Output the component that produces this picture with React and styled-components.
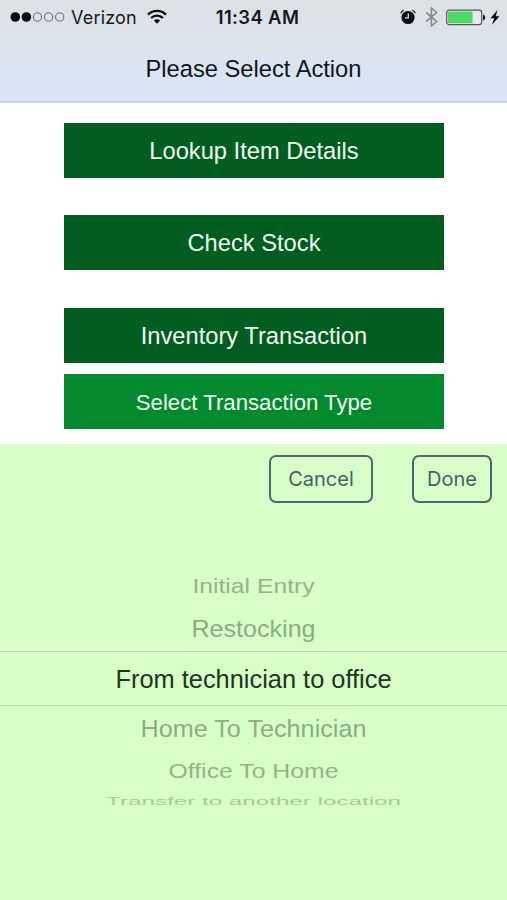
import React from 'react';
import styled, { createGlobalStyle } from 'styled-components';

const GlobalStyle = createGlobalStyle`
  * {
    box-sizing: border-box;
  }
  body {
    margin: 0;
    background: #fff;
    font-family: 'Liberation Sans', Arial, sans-serif;
  }
`;

const Screen = styled.div`
  display: flex;
  flex-direction: column;
  width: 507px;
  height: 900px;
  overflow: hidden;
  background: #fefffe;
`;

const Header = styled.header`
  height: 103px;
  background: linear-gradient(#dde1e6 0%, #dde3eb 40%, #d8e6f8 100%);
  border-bottom: 2px solid #d0d3d8;
`;

const StatusBar = styled.div`
  display: grid;
  grid-template-columns: 1fr auto 1fr;
  align-items: center;
  height: 34px;
  padding: 0 7px 0 10px;
  font-family: 'Inter', sans-serif;
  font-size: 18px;
  color: #15181c;
`;

const StatusGroup = styled.div`
  display: flex;
  align-items: center;
  justify-content: ${({ $end }) => ($end ? 'flex-end' : 'flex-start')};
`;

const Carrier = styled.span`
  margin: 0 10px 0 6px;
  letter-spacing: 0.2px;
`;

const Clock = styled.span`
  padding-left: 5px;
  font-size: 18.4px;
  font-weight: 600;
  letter-spacing: 0.4px;
`;

const Title = styled.h1`
  margin: 0;
  font-size: 23.7px;
  font-weight: 400;
  line-height: 70px;
  text-align: center;
  color: #11161c;
`;

const Actions = styled.main`
  display: flex;
  flex-direction: column;
  height: 341px;
  padding: 20px 63px 0 64px;
`;

const ActionButton = styled.button`
  flex: none;
  height: 55px;
  margin: 0 0 ${({ $gap }) => $gap || 0}px;
  padding: ${({ $light }) => ($light ? 4 : 3)}px 0 0;
  border: 0;
  background: ${({ $light }) => ($light ? '#04892e' : '#025d20')};
  color: #f1fbf2;
  font-family: inherit;
  font-size: ${({ $light }) => ($light ? 22.2 : 23.7)}px;
  line-height: 1;
`;

const Picker = styled.section`
  flex: 1;
  background: #d8ffc8;
`;

const Toolbar = styled.div`
  display: flex;
  justify-content: flex-end;
  gap: 39px;
  height: 125px;
  padding: 11px 15px 0 0;
`;

const ToolButton = styled.button`
  width: ${({ $width }) => $width}px;
  height: 48px;
  padding: 0;
  border: 2px solid #4a6a6c;
  border-radius: 7px;
  background: transparent;
  color: #456268;
  font-family: 'Inter', sans-serif;
  font-size: 20px;
`;

const Wheel = styled.div`
  display: flex;
  flex-direction: column;
`;

const Option = styled.div`
  display: flex;
  align-items: center;
  justify-content: center;
  height: ${({ $height }) => $height}px;
  border: solid ${({ $selected }) => ($selected ? '#b5d9aa' : 'transparent')};
  border-width: ${({ $selected }) => ($selected ? '1px 0' : '0')};
  color: ${({ $color }) => $color};
  font-size: ${({ $size }) => $size}px;
  line-height: 30px;
  white-space: nowrap;

  span {
    transform: scaleY(${({ $squash }) => $squash || 1});
  }
`;

const options = [
  { label: 'Initial Entry', height: 36, size: 24.7, squash: 0.8, color: '#91b586' },
  { label: 'Restocking', height: 46, size: 25.1, squash: 0.96, color: '#8bae81' },
  { label: 'From technician to office', height: 55, size: 25.4, selected: true, color: '#20351f' },
  { label: 'Home To Technician', height: 44, size: 25.2, squash: 0.96, color: '#8bae81' },
  { label: 'Office To Home', height: 43, size: 24.8, squash: 0.81, color: '#91b586' },
  { label: 'Transfer to another location', height: 16, size: 24.2, squash: 0.48, color: '#a6ca99' },
];

const SignalDots = () => (
  <svg width="55" height="12" viewBox="0 0 55 12">
    {[0, 1, 2, 3, 4].map((i) => (
      <circle
        key={i}
        cx={5.3 + i * 11.1}
        cy="6"
        r={i < 2 ? 4.8 : 4.1}
        fill={i < 2 ? '#0b0d10' : 'none'}
        stroke={i < 2 ? 'none' : '#62676d'}
        strokeWidth="1"
      />
    ))}
  </svg>
);

const WifiIcon = () => (
  <svg width="20" height="16" viewBox="0 0 20 16" fill="none" stroke="#0b0d10" strokeWidth="2.3">
    <path d="M1 5.6a12.8 12.8 0 0 1 18 0" />
    <path d="M4.1 9a8.4 8.4 0 0 1 11.8 0" />
    <path d="M10 14.8 6.9 11.6a4.5 4.5 0 0 1 6.2 0z" fill="#0b0d10" stroke="none" />
  </svg>
);

const AlarmIcon = () => (
  <svg width="16" height="16" viewBox="0 0 16 16" fill="none">
    <circle cx="8" cy="8.5" r="6.6" fill="#0b0d10" />
    <path d="M.7 4.2A5 5 0 0 1 3.8 1.2M12.2 1.2a5 5 0 0 1 3.1 3" stroke="#0b0d10" strokeWidth="1.1" />
    <path d="M8.3 4.5v4.3H5" stroke="#dde1e6" strokeWidth="1.3" />
  </svg>
);

const BluetoothIcon = () => (
  <svg width="13" height="20" viewBox="0 0 13 20" fill="none" stroke="#858a90" strokeWidth="1.6">
    <path d="m1 5.3 10.6 9.2L6.4 19V1l5.2 4.5L1 14.7" />
  </svg>
);

const BatteryIcon = () => (
  <svg width="40" height="17" viewBox="0 0 40 17">
    <rect x=".7" y="1.2" width="35" height="14.4" rx="2.5" fill="#e6e9ed" stroke="#4f5a58" strokeWidth="1.2" />
    <rect x="2" y="2.5" width="24.6" height="11.8" rx="1" fill="#4cd863" />
    <path d="M37 5.5c3 .8 3 5.1 0 5.9z" fill="#15181c" />
  </svg>
);

const BoltIcon = () => (
  <svg width="10" height="15" viewBox="0 0 10 15">
    <path d="M7.5 0 .5 8.3h3.7L2 14.8l7.5-8.6H5.7z" fill="#0b0d10" />
  </svg>
);

const IconSlot = styled.span`
  display: flex;
  margin-right: ${({ $gap }) => $gap || 0}px;
`;

const App = () => (
  <>
    <GlobalStyle />
    <Screen>
      <Header>
        <StatusBar>
          <StatusGroup>
            <SignalDots />
            <Carrier>Verizon</Carrier>
            <WifiIcon />
          </StatusGroup>
          <Clock>11:34 AM</Clock>
          <StatusGroup $end>
            <IconSlot $gap={9}>
              <AlarmIcon />
            </IconSlot>
            <IconSlot $gap={8}>
              <BluetoothIcon />
            </IconSlot>
            <IconSlot $gap={4}>
              <BatteryIcon />
            </IconSlot>
            <BoltIcon />
          </StatusGroup>
        </StatusBar>
        <Title>Please Select Action</Title>
      </Header>
      <Actions>
        <ActionButton $gap={37}>Lookup Item Details</ActionButton>
        <ActionButton $gap={38}>Check Stock</ActionButton>
        <ActionButton $gap={11}>Inventory Transaction</ActionButton>
        <ActionButton $light>Select Transaction Type</ActionButton>
      </Actions>
      <Picker>
        <Toolbar>
          <ToolButton $width={104}>Cancel</ToolButton>
          <ToolButton $width={80}>Done</ToolButton>
        </Toolbar>
        <Wheel>
          {options.map((option) => (
            <Option
              key={option.label}
              $height={option.height}
              $size={option.size}
              $squash={option.squash}
              $color={option.color}
              $selected={option.selected}
            >
              <span>{option.label}</span>
            </Option>
          ))}
        </Wheel>
      </Picker>
    </Screen>
  </>
);

export default App;
